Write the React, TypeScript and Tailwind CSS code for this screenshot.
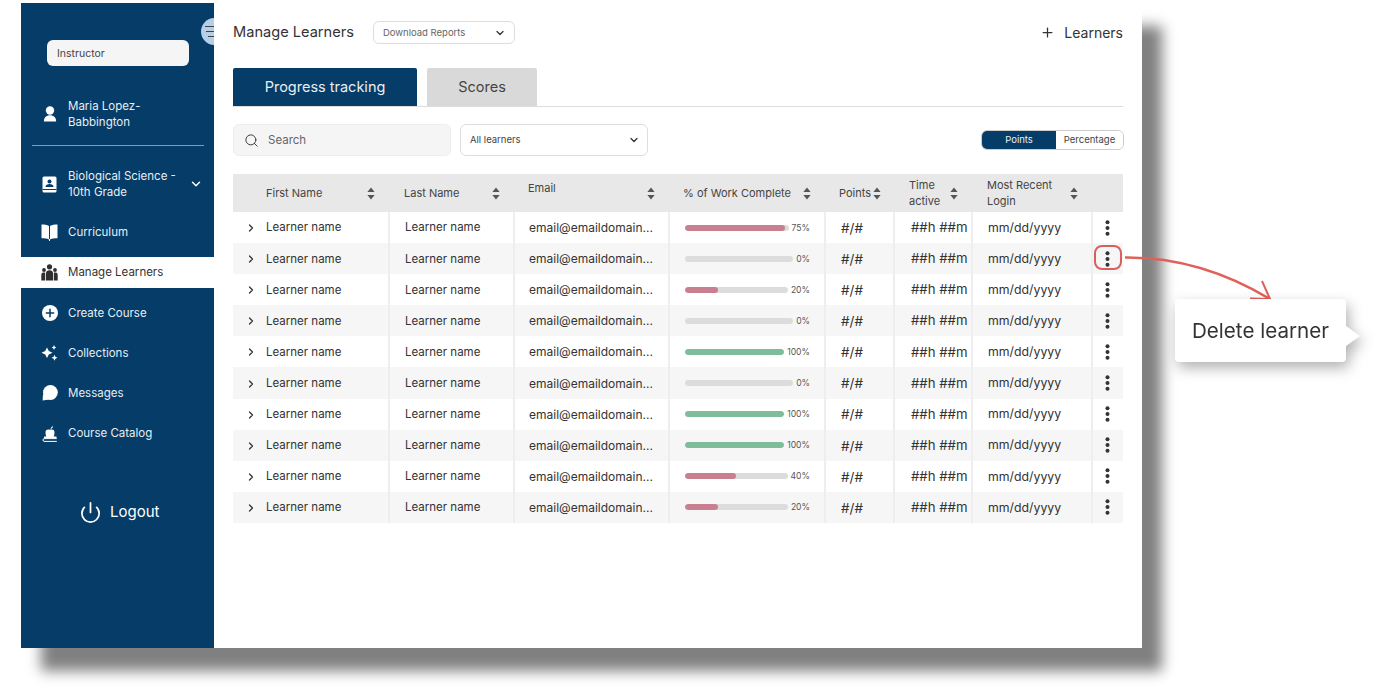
import React from 'react';
import { ChevronDown, ChevronRight, Plus, Power, Search } from 'lucide-react';

// fill is what the bar shows, the mock's bars don't follow the label exactly
const rows = [
    { pct: 75, fill: 97, color: 'bg-[#c97f90]' },
    { pct: 0, fill: 0, color: '' },
    { pct: 20, fill: 32, color: 'bg-[#c97f90]' },
    { pct: 0, fill: 0, color: '' },
    { pct: 100, fill: 100, color: 'bg-[#7fbd9a]' },
    { pct: 0, fill: 0, color: '' },
    { pct: 100, fill: 100, color: 'bg-[#7fbd9a]' },
    { pct: 100, fill: 100, color: 'bg-[#7fbd9a]' },
    { pct: 40, fill: 50, color: 'bg-[#c97f90]' },
    { pct: 20, fill: 32, color: 'bg-[#c97f90]' },
];

const gridCols = 'grid grid-cols-[157px_125px_155px_156px_69px_78px_120px_30px]';

function SortIcon() {
    return (
        <svg width="8" height="13" viewBox="0 0 8 13" className="shrink-0 text-[#555]" fill="currentColor">
            <path d="M4 0.5 L7.6 5 H0.4 Z" />
            <path d="M4 12.5 L7.6 8 H0.4 Z" />
        </svg>
    );
}

function Kebab() {
    return (
        <svg width="5" height="16" viewBox="0 0 5 16" fill="#333">
            <circle cx="2.5" cy="2.2" r="2" />
            <circle cx="2.5" cy="8" r="2" />
            <circle cx="2.5" cy="13.8" r="2" />
        </svg>
    );
}

function PersonIcon() {
    return (
        <svg width="14" height="16" viewBox="0 0 16 18" fill="white">
            <circle cx="8" cy="5" r="4.8" />
            <path d="M1 17.5 C1 13 4 10.5 8 10.5 C12 10.5 15 13 15 17.5 Z" />
        </svg>
    );
}

function ContactBookIcon() {
    return (
        <svg width="15" height="17" viewBox="0 0 15 17">
            <rect x="0.5" y="0.5" width="14" height="16" rx="1.5" fill="white" />
            <circle cx="7.5" cy="5.5" r="2" fill="#053c68" />
            <path d="M3.5 11 C3.5 8.8 5.5 8 7.5 8 C9.5 8 11.5 8.8 11.5 11 Z" fill="#053c68" />
            <rect x="0.5" y="13" width="14" height="1" fill="#053c68" />
        </svg>
    );
}

function BookIcon() {
    return (
        <svg width="17" height="17" viewBox="0 0 17 17" fill="white">
            <path d="M0.5 0.5 C3.5 0.5 6 0.8 8 2 V15.5 C6 14.5 3.5 14.3 0.5 14.3 Z" />
            <path d="M16.5 0.5 C13.5 0.5 11 0.8 9 2 V15.5 C11 14.5 13.5 14.3 16.5 14.3 Z" />
            <rect x="8" y="15" width="1" height="2" />
        </svg>
    );
}

function GroupIcon() {
    return (
        <svg width="17" height="17" viewBox="0 0 17 17" fill="#2f2f2f">
            <circle cx="8.5" cy="2.8" r="2.6" />
            <circle cx="3" cy="6" r="1.9" />
            <circle cx="14" cy="6" r="1.9" />
            <path d="M5 16.5 V9.5 C5 7.5 6.5 6.3 8.5 6.3 C10.5 6.3 12 7.5 12 9.5 V16.5 Z" />
            <path d="M0.3 16.5 V11 C0.3 9 1.5 8.5 3 8.5 C3.5 8.5 3.9 8.6 4.2 8.7 V16.5 Z" />
            <path d="M16.7 16.5 V11 C16.7 9 15.5 8.5 14 8.5 C13.5 8.5 13.1 8.6 12.8 8.7 V16.5 Z" />
        </svg>
    );
}

function PlusCircleIcon() {
    return (
        <svg width="16" height="16" viewBox="0 0 16 16">
            <circle cx="8" cy="8" r="8" fill="white" />
            <path d="M8 3.8 V12.2 M3.8 8 H12.2" stroke="#053c68" strokeWidth="1.5" />
        </svg>
    );
}

function SparkleIcon() {
    return (
        <svg width="17" height="16" viewBox="0 0 17 16" fill="white">
            <path d="M6 2.500 L7.800 6 L11.500 7.800 L7.800 9.600 L6 13 L4.200 9.600 L0.500 7.800 L4.200 6 Z" />
            <path d="M13 0 L13.800 1.700 L15.300 2.500 L13.800 3.300 L13 5 L12.200 3.300 L10.700 2.500 L12.200 1.700 Z" />
            <path d="M13.500 9.800 L14.400 11.700 L16.500 12.800 L14.400 13.800 L13.500 15.800 L12.600 13.800 L10.500 12.800 L12.600 11.700 Z" />
        </svg>
    );
}

function MessageIcon() {
    return (
        <svg width="16" height="16" viewBox="0 0 16 16" fill="white">
            <circle cx="8.4" cy="7.5" r="7.4" />
            <path d="M1 9 L0.6 15.5 L7 14.5 Z" />
        </svg>
    );
}

function CatalogIcon() {
    return (
        <svg width="16" height="17" viewBox="0 0 16 17" fill="white">
            <path d="M3.5 7 C3.5 4.5 6 4 8 4.8 C10 4 12.5 4.5 12.5 7 C12.5 9.5 12 11 11.5 12 H4.5 C4 11 3.5 9.5 3.5 7 Z" />
            <path d="M8.5 4 C8.8 2.5 9.8 1.5 11 1.2 C11 2.6 10 3.7 8.5 4 Z" />
            <rect x="2" y="11.5" width="12.5" height="1.5" />
            <path d="M14.8 13.6 H2 C0.7 13.6 0.7 16.4 2 16.4 H14.8" fill="none" stroke="white" strokeWidth="1" />
        </svg>
    );
}

function IconSlot({ children }: { children: React.ReactNode }) {
    return (
        <div className="w-[47px] shrink-0 pl-[20px]">
            <div className="flex w-[17px] justify-center">{children}</div>
        </div>
    );
}

function NavRow({ icon, label, className = '' }: { icon: React.ReactNode; label: string; className?: string }) {
    return (
        <div className={`flex h-[40px] items-center ${className}`}>
            <IconSlot>{icon}</IconSlot>
            <span className="pt-[1px] text-[11.5px] text-[#e9eef3]">{label}</span>
        </div>
    );
}

function Sidebar() {
    return (
        <aside className="relative flex w-[193px] shrink-0 flex-col overflow-hidden bg-[#053c68] pt-[37px]">
            <div className="absolute left-[180px] top-[15px] flex h-[27px] w-[27px] flex-col items-center justify-center gap-[4px] rounded-full bg-[#b5cfe8] pr-[6px]">
                <span className="h-px w-[13px] bg-[#444]" />
                <span className="h-px w-[11px] bg-[#444]" />
                <span className="h-px w-[7px] bg-[#444]" />
            </div>
            <div className="ml-[26px] flex h-[26px] w-[142px] items-center rounded-[6px] bg-[#f5f5f5] pl-[10px] pt-[1px] text-[10.5px] text-[#444]">
                Instructor
            </div>
            <div className="mt-[32px] flex items-center">
                <IconSlot><PersonIcon /></IconSlot>
                <div className="text-[11.5px] leading-[16px] text-[#e9eef3]">Maria Lopez-<br />Babbington</div>
            </div>
            <div className="ml-[11px] mt-[15px] h-px w-[172px] bg-[#7f9cb5]" />
            <div className="mt-[22px] flex items-center">
                <IconSlot><ContactBookIcon /></IconSlot>
                <div className="w-[120px] text-[11.5px] leading-[16px] text-[#e9eef3]">Biological Science - 10th Grade</div>
                <ChevronDown size={14} strokeWidth={2.5} className="ml-[1px] text-white" />
            </div>
            <NavRow icon={<BookIcon />} label="Curriculum" className="mt-[12px]" />
            <div className="mt-[5px] flex h-[31px] items-center bg-white">
                <IconSlot><GroupIcon /></IconSlot>
                <span className="pt-[1px] text-[11.5px] text-[#333]">Manage Learners</span>
            </div>
            <NavRow icon={<PlusCircleIcon />} label="Create Course" className="mt-[5px]" />
            <NavRow icon={<SparkleIcon />} label="Collections" />
            <NavRow icon={<MessageIcon />} label="Messages" />
            <NavRow icon={<CatalogIcon />} label="Course Catalog" />
            <div className="ml-[58px] mt-[48px] flex items-center gap-[8px]">
                <Power size={23} strokeWidth={1.8} className="text-white" />
                <span className="text-[15px] text-white">Logout</span>
            </div>
        </aside>
    );
}

function HeaderCell({ children, className = '' }: { children: React.ReactNode; className?: string }) {
    return <div className={`flex items-center justify-between text-[11px] leading-[16px] text-[#444] ${className}`}>{children}</div>;
}

function ProgressTable() {
    return (
        <div className="mt-[18px] w-[890px]">
            <div className={`${gridCols} h-[38px] bg-[#e8e8e8]`}>
                <HeaderCell className="pl-[33px] pr-[15px]">First Name<SortIcon /></HeaderCell>
                <HeaderCell className="pl-[14px] pr-[15px]">Last Name<SortIcon /></HeaderCell>
                <HeaderCell className="pl-[13px] pr-[15px]">
                    <span className="-mt-[10px]">Email</span><SortIcon />
                </HeaderCell>
                <HeaderCell className="pl-[13px] pr-[15px]">% of Work Complete<SortIcon /></HeaderCell>
                <HeaderCell className="pl-[13px] pr-[14px]">Points<SortIcon /></HeaderCell>
                <HeaderCell className="pl-[14px] pr-[15px]"><span>Time<br />active</span><SortIcon /></HeaderCell>
                <HeaderCell className="pl-[14px] pr-[15px]"><span>Most Recent<br />Login</span><SortIcon /></HeaderCell>
                <div />
            </div>
            {rows.map((row, i) => (
                <div
                    key={i}
                    className={`${gridCols} h-[31.1px] text-[11.5px] text-[#333] ${i % 2 === 1 ? 'bg-[#f6f6f6]' : 'bg-white'}`}
                >
                    <div className="flex items-center border-r-2 border-[#eeeeee] pl-[12px] pt-[1px]">
                        <ChevronRight size={12} strokeWidth={2.5} className="mr-[9px] text-[#333]" />
                        Learner name
                    </div>
                    <div className="flex items-center border-r-2 border-[#eeeeee] pl-[15px] pt-[1px]">Learner name</div>
                    <div className="flex items-center border-r-2 border-[#eeeeee] pl-[14px] pt-[1px] text-[12px]">
                        <span>email@emaildomain...</span>
                    </div>
                    <div className="flex items-center gap-[3px] border-r-2 border-[#eeeeee] pl-[15px] pr-[14px]">
                        <div className="h-[6px] flex-1 overflow-hidden rounded-full bg-[#dcdcdc]">
                            <div className={`h-full rounded-full ${row.color}`} style={{ width: `${row.fill}%` }} />
                        </div>
                        <span className="pt-[1px] text-[8.6px] text-[#555]">{row.pct}%</span>
                    </div>
                    <div className="flex items-center border-r-2 border-[#eeeeee] pl-[15px] pt-[1px] text-[13.5px]">#/#</div>
                    <div className="flex items-center border-r-2 border-[#eeeeee] pl-[16px] pt-[1px] text-[13.2px]">##h ##m</div>
                    <div className="flex items-center border-r-2 border-[#eeeeee] pl-[15px] pt-[1px] text-[12.3px]">mm/dd/yyyy</div>
                    <div className="relative flex items-center justify-center pr-[1px]">
                        <Kebab />
                        {i === 1 && (
                            <div className="absolute left-[1px] top-[2px] h-[25px] w-[28px] rounded-[8px] border-2 border-[#d9605a]" />
                        )}
                    </div>
                </div>
            ))}
        </div>
    );
}

function Callout() {
    return (
        <>
            <svg className="absolute left-[1120px] top-[250px]" width="160" height="56" viewBox="0 0 160 56" fill="none" stroke="#e0605a" strokeWidth="2.5">
                <path d="M5 7.500 C55 7 105 22 150 49" />
                <path d="M142 31 L150 49 L130 48.500" strokeWidth="2" />
            </svg>
            <div className="absolute left-[1175px] top-[299px] flex h-[63px] w-[171px] items-center rounded-[4px] bg-white pl-[17px] pt-[1px] text-[20.6px] text-[#333] drop-shadow-[3px_6px_7px_rgba(0,0,0,0.3)]">
                Delete learner
                <div className="absolute left-[171px] top-[27px] h-0 w-0 border-y-[10px] border-l-[14px] border-y-transparent border-l-white" />
            </div>
        </>
    );
}

export default function App() {
    return (
        <div className="relative h-[692px] w-[1384px] overflow-hidden bg-white pl-[21px] pt-[3px] font-['Inter',sans-serif]">
            <div className="flex h-[645px] w-[1121px] bg-white shadow-[20px_23px_13px_#808080]">
                <Sidebar />
                <main className="flex-1 pl-[19px] pr-[19px] pt-[18px]">
                    <div className="flex h-[23px] items-center">
                        <h1 className="pt-[1px] text-[14.6px] font-normal text-[#333]">Manage Learners</h1>
                        <div className="ml-[19px] flex h-[23px] w-[142px] items-center justify-between rounded-[6px] border border-[#dddddd] pl-[9px] pr-[8px] pt-[1px] text-[9.5px] text-[#666]">
                            Download Reports
                            <ChevronDown size={12} strokeWidth={2.5} className="text-[#333]" />
                        </div>
                        <div className="ml-auto flex items-center gap-[9px] text-[14px] text-[#333]">
                            <Plus size={15} strokeWidth={2} />
                            Learners
                        </div>
                    </div>
                    <div className="mt-[24px] flex h-[39px] gap-[10px] border-b border-[#dddddd]">
                        <div className="flex w-[184px] items-center justify-center rounded-t-[2px] bg-[#053c68] text-[14.5px] text-[#e9eef3]">Progress tracking</div>
                        <div className="flex w-[110px] items-center justify-center rounded-t-[2px] bg-[#d9d9d9] text-[14.5px] text-[#444]">Scores</div>
                    </div>
                    <div className="mt-[17px] flex h-[32px] items-center">
                        <div className="flex h-[32px] w-[218px] items-center rounded-[6px] border border-[#eeeeee] bg-[#f5f5f5] pl-[10px] pt-[1px] text-[11.5px] text-[#666]">
                            <Search size={15} strokeWidth={1.5} className="mr-[9px] text-[#333]" />
                            Search
                        </div>
                        <div className="ml-[9px] flex h-[32px] w-[188px] items-center justify-between rounded-[6px] border border-[#dddddd] bg-white pl-[9px] pr-[7px] text-[9.5px] text-[#444]">
                            All learners
                            <ChevronDown size={12} strokeWidth={2.5} className="text-[#333]" />
                        </div>
                        <div className="-mr-[1px] ml-auto flex h-[20px] w-[143px] overflow-hidden rounded-[6px] border border-[#cccccc] text-[9.5px]">
                            <div className="flex w-[74px] items-center justify-center bg-[#053c68] text-[#e9eef3]">Points</div>
                            <div className="flex flex-1 items-center justify-center bg-white text-[#444]">Percentage</div>
                        </div>
                    </div>
                    <ProgressTable />
                </main>
            </div>
            <Callout />
        </div>
    );
}
